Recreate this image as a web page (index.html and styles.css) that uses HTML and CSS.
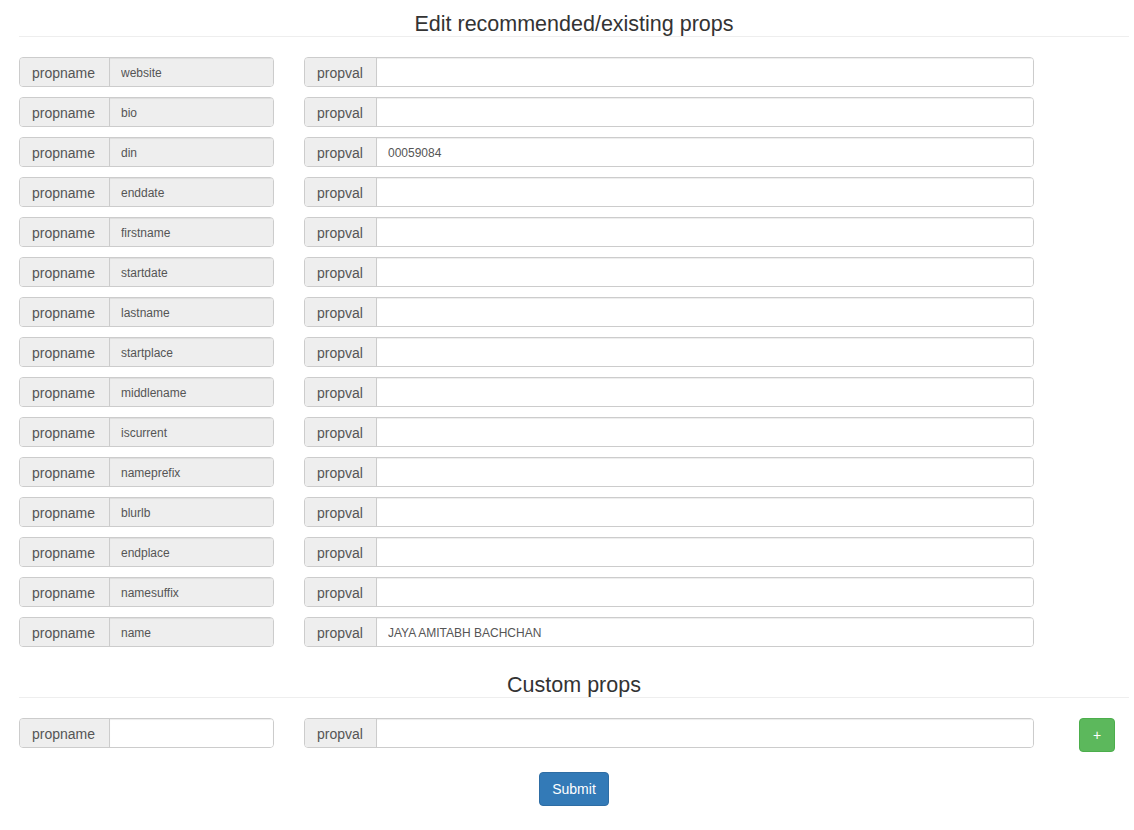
FILE: index.html
```html
<!DOCTYPE html>
<html>
<head>
<meta charset="utf-8">
<link rel="stylesheet" href="styles.css">
</head>
<body>
<div class="page">
  <h3 class="section-title">Edit recommended/existing props</h3>
  <div class="rows">
    <div class="row"><div class="ig name"><span class="addon">propname</span><input class="field ro" readonly value="website"></div><div class="ig val"><span class="addon">propval</span><input class="field" value=""></div></div>
    <div class="row"><div class="ig name"><span class="addon">propname</span><input class="field ro" readonly value="bio"></div><div class="ig val"><span class="addon">propval</span><input class="field" value=""></div></div>
    <div class="row"><div class="ig name"><span class="addon">propname</span><input class="field ro" readonly value="din"></div><div class="ig val"><span class="addon">propval</span><input class="field" value="00059084"></div></div>
    <div class="row"><div class="ig name"><span class="addon">propname</span><input class="field ro" readonly value="enddate"></div><div class="ig val"><span class="addon">propval</span><input class="field" value=""></div></div>
    <div class="row"><div class="ig name"><span class="addon">propname</span><input class="field ro" readonly value="firstname"></div><div class="ig val"><span class="addon">propval</span><input class="field" value=""></div></div>
    <div class="row"><div class="ig name"><span class="addon">propname</span><input class="field ro" readonly value="startdate"></div><div class="ig val"><span class="addon">propval</span><input class="field" value=""></div></div>
    <div class="row"><div class="ig name"><span class="addon">propname</span><input class="field ro" readonly value="lastname"></div><div class="ig val"><span class="addon">propval</span><input class="field" value=""></div></div>
    <div class="row"><div class="ig name"><span class="addon">propname</span><input class="field ro" readonly value="startplace"></div><div class="ig val"><span class="addon">propval</span><input class="field" value=""></div></div>
    <div class="row"><div class="ig name"><span class="addon">propname</span><input class="field ro" readonly value="middlename"></div><div class="ig val"><span class="addon">propval</span><input class="field" value=""></div></div>
    <div class="row"><div class="ig name"><span class="addon">propname</span><input class="field ro" readonly value="iscurrent"></div><div class="ig val"><span class="addon">propval</span><input class="field" value=""></div></div>
    <div class="row"><div class="ig name"><span class="addon">propname</span><input class="field ro" readonly value="nameprefix"></div><div class="ig val"><span class="addon">propval</span><input class="field" value=""></div></div>
    <div class="row"><div class="ig name"><span class="addon">propname</span><input class="field ro" readonly value="blurlb"></div><div class="ig val"><span class="addon">propval</span><input class="field" value=""></div></div>
    <div class="row"><div class="ig name"><span class="addon">propname</span><input class="field ro" readonly value="endplace"></div><div class="ig val"><span class="addon">propval</span><input class="field" value=""></div></div>
    <div class="row"><div class="ig name"><span class="addon">propname</span><input class="field ro" readonly value="namesuffix"></div><div class="ig val"><span class="addon">propval</span><input class="field" value=""></div></div>
    <div class="row"><div class="ig name"><span class="addon">propname</span><input class="field ro" readonly value="name"></div><div class="ig val"><span class="addon">propval</span><input class="field" value="JAYA AMITABH BACHCHAN"></div></div>
  </div>
  <h3 class="section-title custom">Custom props</h3>
  <div class="row custom-row">
    <div class="ig name"><span class="addon">propname</span><input class="field" value=""></div>
    <div class="ig val"><span class="addon">propval</span><input class="field" value=""></div>
    <button class="btn btn-add" type="button">+</button>
  </div>
  <div class="submit-wrap"><button class="btn btn-submit" type="button">Submit</button></div>
</div>
</body>
</html>
```
FILE: styles.css
```css
* { box-sizing: border-box; }
html, body { margin: 0; padding: 0; background: #fff; }
body {
  font-family: "Liberation Sans", Arial, Helvetica, sans-serif;
  font-size: 14px;
  color: #333;
}
.page {
  padding: 12px 5px 0 19px;
}
.section-title {
  margin: 0;
  font-size: 21.5px;
  font-weight: 500;
  line-height: 24px;
  text-align: center;
  color: #333;
  border-bottom: 1px solid #eee;
}
.rows {
  margin-top: 20px;
  display: flex;
  flex-direction: column;
  gap: 10px;
}
.row {
  display: flex;
  align-items: flex-start;
}
.ig {
  display: flex;
  height: 30px;
  border: 1px solid #ccc;
  border-radius: 4px;
  overflow: hidden;
  box-shadow: inset 0 1px 1px rgba(0,0,0,.075);
}
.ig.name { width: 255px; }
.ig.val { width: 730px; margin-left: 30px; }
.addon {
  flex: none;
  display: flex;
  align-items: center;
  padding: 2px 0 0 12px;
  background: #eee;
  color: #555;
  font-size: 14px;
  border-right: 1px solid #ccc;
  white-space: nowrap;
}
.ig.name .addon { width: 90px; }
.ig.val .addon { width: 72px; }
.field {
  flex: 1;
  min-width: 0;
  border: 0;
  margin: 0;
  height: 28px;
  padding: 2px 10px 0 11px;
  font-family: "Liberation Sans", Arial, Helvetica, sans-serif;
  font-size: 12px;
  color: #555;
  background: #fff;
  box-shadow: inset 0 1px 1px rgba(0,0,0,.075);
  outline: none;
}
.field.ro { background: #eee; }
.section-title.custom { margin-top: 26px; }
.custom-row { margin-top: 20px; }
.btn {
  font-family: "Liberation Sans", Arial, Helvetica, sans-serif;
  font-size: 14px;
  color: #fff;
  border-radius: 4px;
  cursor: pointer;
  margin: 0;
}
.btn-add {
  margin-left: 45px;
  width: 36px;
  height: 34px;
  padding: 0;
  background: #5cb85c;
  border: 1px solid #4cae4c;
}
.submit-wrap {
  margin-top: 20px;
  display: flex;
  justify-content: center;
}
.btn-submit {
  width: 70px;
  height: 34px;
  padding: 0;
  background: #337ab7;
  border: 1px solid #2e6da4;
}
```
